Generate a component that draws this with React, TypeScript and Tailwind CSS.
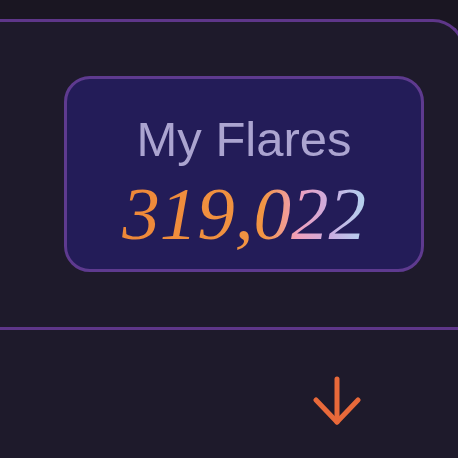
export default function App() {
  return (
    <div className="h-[458px] w-[458px] overflow-hidden bg-[#1a1622] pt-[19px]">
      <div className="-ml-[20px] h-[500px] w-[485px] rounded-tr-[32px] border-t-[3px] border-r-[3px] border-[#5e3689] bg-[#1e1a2b]">
        {/* header with balance card */}
        <div className="border-b-[3px] border-[#5e3689] pb-[55px] pl-[84px] pt-[54px]">
          <div className="flex h-[196px] w-[360px] flex-col items-center rounded-[26px] border-[3px] border-[#5e3a8f] bg-[#231c58] pt-[36px]">
            <div className="font-['Liberation_Sans',Arial,sans-serif] text-[49px] leading-none text-[#aba4d0]">
              My Flares
            </div>
            <div className="mt-[12px] bg-[linear-gradient(90deg,#ee8738_0%,#f29543_58%,#f0a0bc_72%,#c9aee2_86%,#b3d3ef_100%)] bg-clip-text font-['Liberation_Serif','Times_New_Roman',serif] text-[75px] italic leading-none text-transparent">
              319,022
            </div>
          </div>
        </div>

        {/* scroll hint */}
        <svg
          className="ml-[333px] mt-[46px]"
          width="48"
          height="50"
          viewBox="0 0 48 50"
          fill="none"
          stroke="#e8693a"
          strokeWidth="5"
          strokeLinecap="round"
          strokeLinejoin="round"
        >
          <path d="M24 3v43" />
          <path d="M3 24l21 22 21-22" />
        </svg>
      </div>
    </div>
  );
}
